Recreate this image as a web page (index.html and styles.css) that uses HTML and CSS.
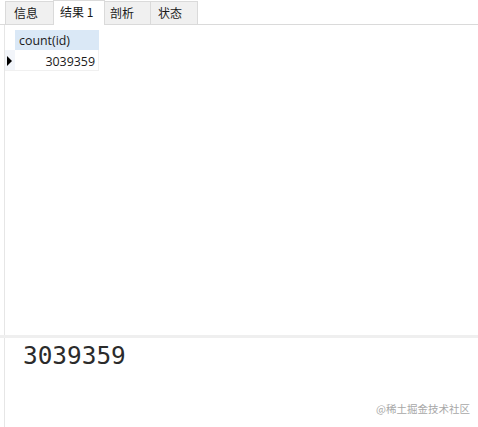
FILE: index.html
```html
<!DOCTYPE html>
<html>
<head>
<meta charset="utf-8">
<link rel="stylesheet" href="styles.css">
</head>
<body>
<div class="app">
  <div class="tabbar">
    <div class="tab t1">信息</div>
    <div class="tab t2 active">结果 1</div>
    <div class="tab t3">剖析</div>
    <div class="tab t4">状态</div>
  </div>
  <div class="results">
    <div class="grid">
      <div class="corner"></div>
      <div class="head">count(id)</div>
      <div class="indicator"><span class="arrow"></span></div>
      <div class="cell">3039359</div>
    </div>
  </div>
  <div class="sep"></div>
  <div class="detail">
    <div class="value">3039359</div>
    <div class="mark">@稀土掘金技术社区</div>
  </div>
</div>
</body>
</html>
```
FILE: styles.css
```css
html, body {
  margin: 0;
  padding: 0;
  background: #fff;
}
.app {
  width: 478px;
  height: 427px;
  display: flex;
  flex-direction: column;
  font-family: "Noto Sans CJK SC", "Noto Sans", sans-serif;
  color: #1a1a1a;
}
.tabbar {
  height: 24px;
  border-bottom: 1px solid #dadada;
  display: flex;
  align-items: flex-end;
  padding-left: 5px;
}
.tab {
  box-sizing: border-box;
  height: 23px;
  border: 1px solid #dadada;
  border-bottom: none;
  background: #f0f0f0;
  margin-right: -1px;
  font-size: 12px;
  line-height: 21px;
  padding-left: 8px;
}
.t1 { width: 49px; }
.t2 { width: 52px; }
.t3 { width: 47px; padding-left: 5px; }
.t4 { width: 48px; padding-left: 7px; }
.tab.active {
  height: 25px;
  margin-bottom: -1px;
  background: #fff;
  position: relative;
  z-index: 1;
  padding-left: 6px;
  line-height: 22px;
}
.results {
  height: 310px;
  border-left: 1px solid #e6e6e6;
  margin-left: 4px;
  padding-top: 5px;
  box-sizing: border-box;
}
.grid {
  display: grid;
  grid-template-columns: 10px 84px;
  grid-template-rows: 20px 21px;
  font-family: "Open Sans", "Noto Sans", sans-serif;
  font-size: 12.4px;
}
.corner { background: #fff; }
.head {
  background: #dae8f6;
  padding-left: 4px;
  line-height: 21px;
  color: #1a1a1a;
}
.indicator {
  background: #f2f5fa;
  display: flex;
  align-items: center;
  padding-left: 2px;
  padding-top: 2px;
  border-bottom: 1px solid #f0f0f0;
}
.arrow {
  width: 0;
  height: 0;
  border-top: 5px solid transparent;
  border-bottom: 5px solid transparent;
  border-left: 5px solid #000;
}
.cell {
  text-align: right;
  padding-right: 3px;
  line-height: 23px;
  border-right: 1px solid #f0f0f0;
  border-bottom: 1px solid #f0f0f0;
}
.sep {
  height: 3px;
  background: #efefef;
}
.detail {
  flex: 1;
  border-left: 1px solid #e6e6e6;
  margin-left: 4px;
  display: flex;
  flex-direction: column;
  padding-left: 18px;
}
.value {
  font-family: "DejaVu Sans Mono", monospace;
  font-size: 24.4px;
  line-height: 30px;
  margin-top: 3px;
  color: #2b2b2b;
}
.mark {
  margin-top: auto;
  margin-bottom: 11px;
  align-self: flex-end;
  margin-right: 8px;
  font-size: 10.5px;
  color: #a8a8a8;
  font-family: "Noto Sans CJK SC", sans-serif;
}
```
